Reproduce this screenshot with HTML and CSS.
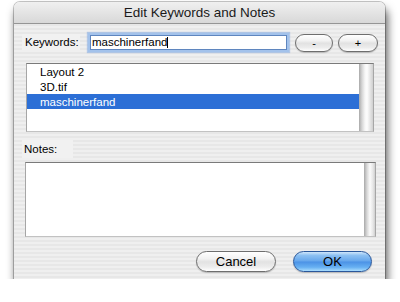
FILE: index.html
```html
<!DOCTYPE html>
<html lang="en">
<head>
    <meta charset="UTF-8">
    <title>Edit Keywords and Notes</title>
    <link rel="stylesheet" href="styles.css">
</head>
<body>
    <div class="window">
        <div class="titlebar">Edit Keywords and Notes</div>

        <div class="content">
            <div class="keyword-row">
                <span class="label">Keywords:</span>
                <div class="field">maschinerfand<span class="caret"></span></div>
                <button class="pill small minus">-</button>
                <button class="pill small plus">+</button>
            </div>

            <div class="box keyword-list">
                <ul class="items">
                    <li>Layout 2</li>
                    <li>3D.tif</li>
                    <li class="selected">maschinerfand</li>
                </ul>
                <div class="scrollbar"></div>
            </div>

            <div class="label notes-label">Notes:</div>

            <div class="box notes">
                <div class="notes-area"></div>
                <div class="scrollbar thin"></div>
            </div>

            <div class="actions">
                <button class="pill cancel">Cancel</button>
                <button class="pill default">OK</button>
            </div>
        </div>
    </div>
</body>
</html>
```

FILE: styles.css
```css
body {
    margin: 0;
    padding: 2px 0 0 14px;
    background: #ffffff;
    font-family: 'Liberation Sans', Arial, sans-serif;
    font-size: 11px;
    color: #000;
}

.window {
    width: 371px;
    height: 277px;
    display: flex;
    flex-direction: column;
    border-radius: 6px 6px 0 0;
    background: repeating-linear-gradient(to bottom, #efefef 0, #efefef 2px, #e7e7e7 2px, #e7e7e7 4px);
    box-shadow: 0 0 0 1px rgba(0,0,0,0.22), 2px 7px 10px rgba(0,0,0,0.7);
}

.titlebar {
    height: 21px;
    line-height: 21px;
    text-align: center;
    font-size: 13.5px;
    color: #1a1a1a;
    border-radius: 6px 6px 0 0;
    border-bottom: 1px solid #959595;
    background: linear-gradient(to bottom, #f0f0f0, #d8d8d8);
}

.content {
    display: flex;
    flex-direction: column;
}

.label {
    background: #f1f1f1;
    box-sizing: border-box;
}

/* keywords field row */
.keyword-row {
    display: flex;
    align-items: center;
    height: 20px;
    margin-top: 8px;
    padding-left: 8px;
}

.keyword-row .label {
    width: 58px;
    height: 16px;
    line-height: 16px;
    padding-left: 3px;
    font-size: 11.5px;
}

.field {
    width: 197px;
    height: 15px;
    box-sizing: border-box;
    margin: 0 3px 0 10px;
    padding-left: 1px;
    line-height: 13px;
    font-size: 11.5px;
    background: #fff;
    border: 1px solid #5f86bf;
    box-shadow: 0 0 0 2px #a3c2eb, 0 0 1px 3px rgba(130,170,225,0.55);
}

.caret {
    display: inline-block;
    width: 1px;
    height: 11px;
    background: #000;
    vertical-align: -2px;
}

.pill {
    box-sizing: border-box;
    padding: 0;
    font-family: inherit;
    color: #000;
    border: 1px solid #6e6e6e;
    background: linear-gradient(to bottom, #ffffff 0%, #f2f2f2 35%, #e2e2e2 52%, #ececec 78%, #ffffff 100%);
    box-shadow: 0 1px 1px rgba(0,0,0,0.2);
}

.small {
    height: 18px;
    margin-top: 2px;
    margin-left: 5px;
    border-radius: 9px;
    font-size: 11px;
}

.minus { width: 38px; }
.plus { width: 40px; }

/* list boxes */
.box {
    display: flex;
    box-sizing: border-box;
    border: 1px solid;
    border-color: #7a7a7a #a6a6a6 #c2c2c2 #a6a6a6;
}

.keyword-list {
    width: 348px;
    height: 69px;
    margin: 11px 0 0 12px;
}

.items {
    flex: 1;
    margin: 0;
    padding: 0;
    list-style: none;
    background: #fff;
}

.items li {
    height: 15px;
    line-height: 16px;
    padding-left: 13px;
    font-size: 11.5px;
}

.items li.selected {
    background: #2c6fd6;
    color: #fff;
}

.scrollbar {
    width: 14px;
    background: linear-gradient(to right, #a9a9a9 0, #d6d6d6 3px, #f6f6f6 6px, #fdfdfd 8px, #e6e6e6 11px, #cfcfcf 14px);
}

.scrollbar.thin {
    width: 11px;
    background: linear-gradient(to right, #a9a9a9 0, #d8d8d8 3px, #fbfbfb 6px, #e6e6e6 9px, #cfcfcf 11px);
}

.notes-label {
    width: 51px;
    height: 18px;
    line-height: 18px;
    margin: 8px 0 0 8px;
    padding-left: 2px;
    font-size: 11.5px;
}

.notes {
    width: 351px;
    height: 75px;
    margin: 4px 0 0 11px;
}

.notes-area {
    flex: 1;
    background: #fff;
}

/* bottom buttons */
.actions {
    display: flex;
    justify-content: flex-end;
    gap: 17px;
    margin-top: 14px;
    padding-right: 13px;
}

.actions .pill {
    height: 21px;
    border-radius: 11px;
    font-size: 13px;
}

.cancel { width: 80px; }

.default {
    width: 79px;
    border-color: #2a579a;
    background: linear-gradient(to bottom, #cfe6fb 0%, #8cc0f2 18%, #68a8ec 46%, #4c93e6 53%, #67b0f2 80%, #a9dcfd 100%);
}
```
